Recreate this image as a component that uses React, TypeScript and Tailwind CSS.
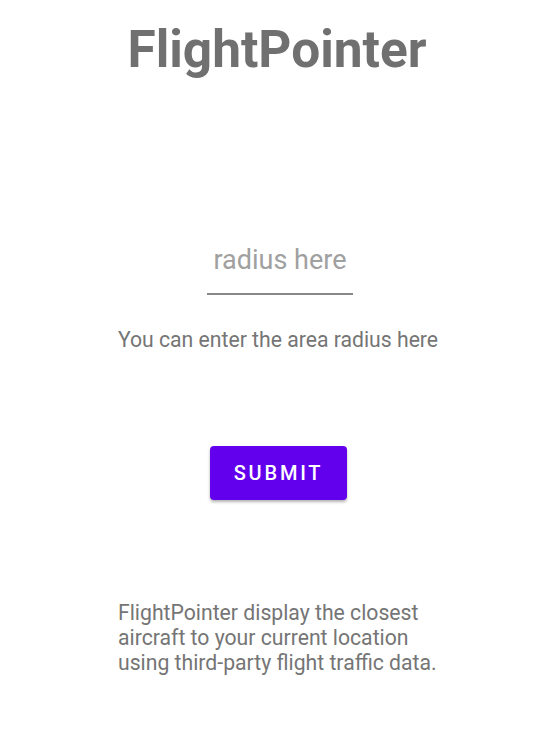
export default function App() {
  return (
    <div className="min-h-[730px] w-full bg-white font-['Roboto',sans-serif] flex flex-col items-center">
      <h1 className="mt-[20px] text-[51.4px] leading-[60px] font-bold text-[#707070]">FlightPointer</h1>

      <div className="mt-[162px] ml-[6px] w-[146px] flex flex-col items-center">
        <input
          placeholder="radius here"
          className="w-full bg-transparent text-center text-[27px] leading-[36px] text-[#333] placeholder:text-[#a0a0a0] outline-none pb-[15px] border-b-[2px] border-[#888]"
        />
      </div>

      <p className="mt-[33px] ml-[2px] text-[21.2px] leading-[24px] text-[#757575]">You can enter the area radius here</p>

      <button className="mt-[94px] ml-[3px] w-[137px] h-[54px] rounded-[4px] bg-[#6200ee] text-white text-[20px] font-medium tracking-[2.8px] shadow-[0_2px_3px_rgba(0,0,0,0.3)]">
        SUBMIT
      </button>

      <p className="mt-[100px] ml-[2px] w-[320px] text-[21.2px] leading-[25px] text-[#757575]">
        FlightPointer display the closest aircraft to your current location using third-party flight traffic data.
      </p>
    </div>
  )
}
